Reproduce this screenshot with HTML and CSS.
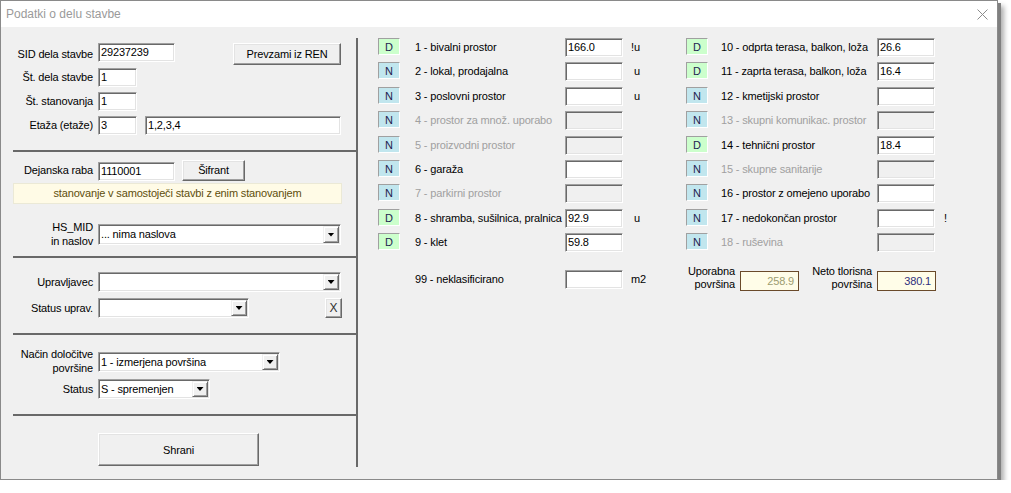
FILE: index.html
```html
<!DOCTYPE html>
<html lang="sl">
<head>
<meta charset="utf-8">
<title>Podatki o delu stavbe</title>
<link rel="stylesheet" href="styles.css">
</head>
<body>
<div class="window">
  <div class="titlebar">
    <span class="title">Podatki o delu stavbe</span>
    <svg class="close" width="11" height="11" viewBox="0 0 11 11"><path d="M0.5 0.5 L10.5 10.5 M10.5 0.5 L0.5 10.5" stroke="#8c8c8c" stroke-width="1" fill="none"/></svg>
  </div>
  <div class="client">
    <div class="panel">
      <section class="sec sec1">
        <div class="row r-first">
          <span class="lbl">SID dela stavbe</span>
          <div class="field w76">29237239</div>
          <button class="btn prevzami">Prevzami iz REN</button>
        </div>
        <div class="row">
          <span class="lbl">Št. dela stavbe</span>
          <div class="field w39">1</div>
        </div>
        <div class="row">
          <span class="lbl">Št. stanovanja</span>
          <div class="field w39">1</div>
        </div>
        <div class="row">
          <span class="lbl">Etaža (etaže)</span>
          <div class="field w39">3</div>
          <div class="field w196 ml8">1,2,3,4</div>
        </div>
      </section>
      <section class="sec sec2">
        <div class="row r-raba">
          <span class="lbl">Dejanska raba</span>
          <div class="field w76">1110001</div>
          <button class="btn sifrant">Šifrant</button>
        </div>
        <div class="infobar">stanovanje v samostoječi stavbi z enim stanovanjem</div>
        <div class="row r-hs">
          <span class="lbl two">HS_MID<br>in naslov</span>
          <div class="combo w243 h21"><span class="ctext">... nima naslova</span><span class="drop"></span></div>
        </div>
      </section>
      <section class="sec sec3">
        <div class="row r-combo">
          <span class="lbl">Upravljavec</span>
          <div class="combo w243"><span class="ctext"></span><span class="drop"></span></div>
        </div>
        <div class="row r-combo r-gap6">
          <span class="lbl">Status uprav.</span>
          <div class="combo w151"><span class="ctext"></span><span class="drop"></span></div>
          <button class="btn xbtn">X</button>
        </div>
      </section>
      <section class="sec sec4">
        <div class="row r-combo">
          <span class="lbl two">Način določitve<br>površine</span>
          <div class="combo w182"><span class="ctext">1 - izmerjena površina</span><span class="drop"></span></div>
        </div>
        <div class="row r-combo r-gap7">
          <span class="lbl">Status</span>
          <div class="combo w112"><span class="ctext">S - spremenjen</span><span class="drop"></span></div>
        </div>
      </section>
      <section class="sec sec5">
        <button class="btn shrani">Shrani</button>
      </section>
    </div>

    <div class="areas">
      <div class="col col1">
        <div class="arow"><span class="badge d">D</span><span class="alabel">1 - bivalni prostor</span><div class="field af">166.0</div><span class="suf">!u</span></div>
        <div class="arow"><span class="badge n">N</span><span class="alabel">2 - lokal, prodajalna</span><div class="field af"></div><span class="suf"> u</span></div>
        <div class="arow"><span class="badge n">N</span><span class="alabel">3 - poslovni prostor</span><div class="field af"></div><span class="suf"> u</span></div>
        <div class="arow dis"><span class="badge n">N</span><span class="alabel">4 - prostor za množ. uporabo</span><div class="field af off"></div></div>
        <div class="arow dis"><span class="badge n">N</span><span class="alabel">5 - proizvodni prostor</span><div class="field af off"></div></div>
        <div class="arow"><span class="badge n">N</span><span class="alabel">6 - garaža</span><div class="field af"></div></div>
        <div class="arow dis"><span class="badge n">N</span><span class="alabel">7 - parkirni prostor</span><div class="field af off"></div></div>
        <div class="arow"><span class="badge d">D</span><span class="alabel">8 - shramba, sušilnica, pralnica</span><div class="field af">92.9</div><span class="suf"> u</span></div>
        <div class="arow"><span class="badge d">D</span><span class="alabel">9 - klet</span><div class="field af">59.8</div></div>
        <div class="arow r99"><span class="badge none"></span><span class="alabel">99 - neklasificirano</span><div class="field af"></div><span class="suf">m2</span></div>
      </div>
      <div class="col col2">
        <div class="arow"><span class="badge d">D</span><span class="alabel">10 - odprta terasa, balkon, loža</span><div class="field af">26.6</div></div>
        <div class="arow"><span class="badge d">D</span><span class="alabel">11 - zaprta terasa, balkon, loža</span><div class="field af">16.4</div></div>
        <div class="arow"><span class="badge n">N</span><span class="alabel">12 - kmetijski prostor</span><div class="field af"></div></div>
        <div class="arow dis"><span class="badge n">N</span><span class="alabel">13 - skupni komunikac. prostor</span><div class="field af off"></div></div>
        <div class="arow"><span class="badge d">D</span><span class="alabel">14 - tehnični prostor</span><div class="field af">18.4</div></div>
        <div class="arow dis"><span class="badge n">N</span><span class="alabel">15 - skupne sanitarije</span><div class="field af off"></div></div>
        <div class="arow"><span class="badge n">N</span><span class="alabel">16 - prostor z omejeno uporabo</span><div class="field af"></div></div>
        <div class="arow"><span class="badge n">N</span><span class="alabel">17 - nedokončan prostor</span><div class="field af"></div><span class="suf">!</span></div>
        <div class="arow dis"><span class="badge n">N</span><span class="alabel">18 - ruševina</span><div class="field af off"></div></div>
        <div class="totals">
          <span class="tlabel t1">Uporabna<br>površina</span>
          <div class="tbox v1">258.9</div>
          <span class="tlabel t2">Neto tlorisna<br>površina</span>
          <div class="tbox v2">380.1</div>
        </div>
      </div>
    </div>
  </div>
</div>
</body>
</html>
```

FILE: styles.css
```css
* { box-sizing: border-box; }
html, body { margin: 0; padding: 0; background: #ffffff; }
body {
  font-family: "Liberation Sans", Arial, sans-serif;
  font-size: 11px;
  letter-spacing: -0.15px;
  color: #000;
}

.window {
  width: 998px;
  height: 480px;
  border: 1px solid #8a8a8a;
  background: #f0f0f0;
  box-shadow: 3px 3px 0 #808080, 6px 6px 5px rgba(0, 0, 0, 0.32);
  display: flex;
  flex-direction: column;
}

.titlebar {
  flex: none;
  height: 26px;
  background: #fff;
  display: flex;
  align-items: center;
  justify-content: space-between;
  padding: 0 9px 0 5px;
}
.title { font-size: 12px; letter-spacing: 0; color: #9a9a9a; }
.close { display: block; }

.client { flex: 1; display: flex; align-items: flex-start; }

/* left panel */
.panel {
  flex: none;
  width: 345px;
  margin: 11px 0 0 12px;
  border-right: 2px solid #696969;
}
.sec { border-bottom: 2px solid #696969; }
.sec5 { border-bottom: none; padding: 17px 0 1px 85px; }
.sec1 { padding: 5px 0 15px; }
.sec2 { padding: 8px 0 11px; }
.sec3 { padding: 14px 0 15px; }
.sec4 { padding: 17px 0 15px; }

.row { display: flex; align-items: flex-end; height: 19px; margin-top: 5px; }
.sec1 .row.r-first { height: 22px; margin-top: 0; align-items: flex-start; }
.sec1 .row:nth-child(2) { margin-top: 3px; }
.row.r-raba { height: 21px; margin-top: 0; }
.row.r-hs { height: 21px; margin-top: 20px; }
.row.r-combo { height: 20px; margin-top: 0; }
.row.r-gap6 { margin-top: 6px; }
.row.r-gap7 { margin-top: 7px; }

.lbl {
  flex: none;
  width: 80px;
  margin-right: 5px;
  text-align: right;
  white-space: nowrap;
  line-height: 19px;
  align-self: center;
}
.lbl.two {
  line-height: 14px;
  align-self: flex-end;
  margin-top: -8px;
  margin-bottom: -3px;
}

.field {
  flex: none;
  height: 19px;
  background: #fff;
  border: 1px solid;
  border-color: #a0a0a0 #fff #fff #a0a0a0;
  box-shadow: inset 1px 1px 0 #696969, inset -1px -1px 0 #e3e3e3;
  padding: 0 0 0 2px;
  line-height: 17px;
  white-space: nowrap;
  overflow: hidden;
}
.field.off { background: #f0f0f0; }
.w76 { width: 77px; }
.w39 { width: 39px; }
.w196 { width: 196px; }
.ml8 { margin-left: 8px; }

.btn {
  font: inherit;
  letter-spacing: inherit;
  color: #000;
  background: #f0f0f0;
  border: 1px solid;
  border-color: #fff #696969 #696969 #fff;
  box-shadow: inset -1px -1px 0 #a0a0a0, inset 1px 1px 0 #e3e3e3;
  padding: 0;
  margin: 0;
  flex: none;
}
.prevzami { width: 108px; height: 22px; margin-left: 58px; }
.sifrant { width: 63px; height: 21px; margin-left: 7px; padding-bottom: 2px; }
.xbtn { width: 17px; height: 20px; margin-left: 76px; font-size: 12px; color: #333; }
.shrani { width: 161px; height: 33px; }

.infobar {
  margin-top: 2px;
  width: 329px;
  height: 21px;
  background: #fffbe6;
  border: 1px solid #ebe9d6;
  text-align: center;
  line-height: 19px;
  color: #5e4e0c;
}

.combo {
  flex: none;
  display: flex;
  height: 20px;
  background: #fff;
  border: 1px solid;
  border-color: #a0a0a0 #fff #fff #a0a0a0;
  box-shadow: inset 1px 1px 0 #696969, inset -1px -1px 0 #e3e3e3;
  padding: 1px;
}
.combo.h21 { height: 21px; }
.w243 { width: 243px; }
.w151 { width: 151px; }
.w182 { width: 182px; }
.w112 { width: 112px; }
.ctext { flex: 1; padding-left: 1px; white-space: nowrap; overflow: hidden; line-height: 16px; }
.h21 .ctext { line-height: 17px; }
.drop {
  flex: none;
  width: 16px;
  background: #f0f0f0;
  border: 1px solid;
  border-color: #f0f0f0 #696969 #696969 #f0f0f0;
  box-shadow: inset 1px 1px 0 #fff, inset -1px -1px 0 #a0a0a0;
  display: flex;
  align-items: center;
  justify-content: center;
}
.drop::after {
  content: "";
  width: 7px;
  height: 4px;
  background: #000;
  clip-path: polygon(0 0, 100% 0, 50% 100%);
}

/* right areas */
.areas { flex: none; display: flex; margin-top: 11px; }
.col { display: flex; flex-direction: column; gap: 5.4px; }
.col1 { width: 308px; margin-left: 20px; }
.arow { display: flex; align-items: flex-start; height: 19px; }
.badge {
  flex: none;
  width: 22px;
  height: 17px;
  border: 1px solid;
  border-color: #a0a0a0 #fff #fff #a0a0a0;
  text-align: center;
  line-height: 16px;
  color: #1e1e50;
  letter-spacing: 0;
}
.badge.d { background: #ccffcc; }
.badge.n { background: #c1e6ee; }
.badge.none { border-color: transparent; }
.alabel { flex: none; width: 150px; margin-left: 15px; line-height: 19px; white-space: nowrap; }
.col2 .alabel { width: 156px; margin-left: 13px; }
.dis .alabel { color: #a0a0a0; }
.af { width: 58px; }
.suf { margin-left: 8px; line-height: 19px; white-space: pre; }
.col2 .suf { margin-left: 9px; }
.arow.r99 { margin-top: 12.4px; }

.totals { display: flex; align-items: flex-end; height: 20px; margin-top: 13.4px; }
.tlabel { flex: none; text-align: right; line-height: 13px; white-space: nowrap; }
.t1 { width: 49px; margin-right: 5px; }
.t2 { width: 73px; margin-right: 5px; }
.tbox {
  flex: none;
  width: 59px;
  height: 20px;
  border: 1px solid #6a4a2a;
  background: #fffde8;
  text-align: right;
  padding-right: 4px;
  line-height: 18px;
}
.v1 { color: #9c9c70; }
.v2 { color: #30307e; }
```
